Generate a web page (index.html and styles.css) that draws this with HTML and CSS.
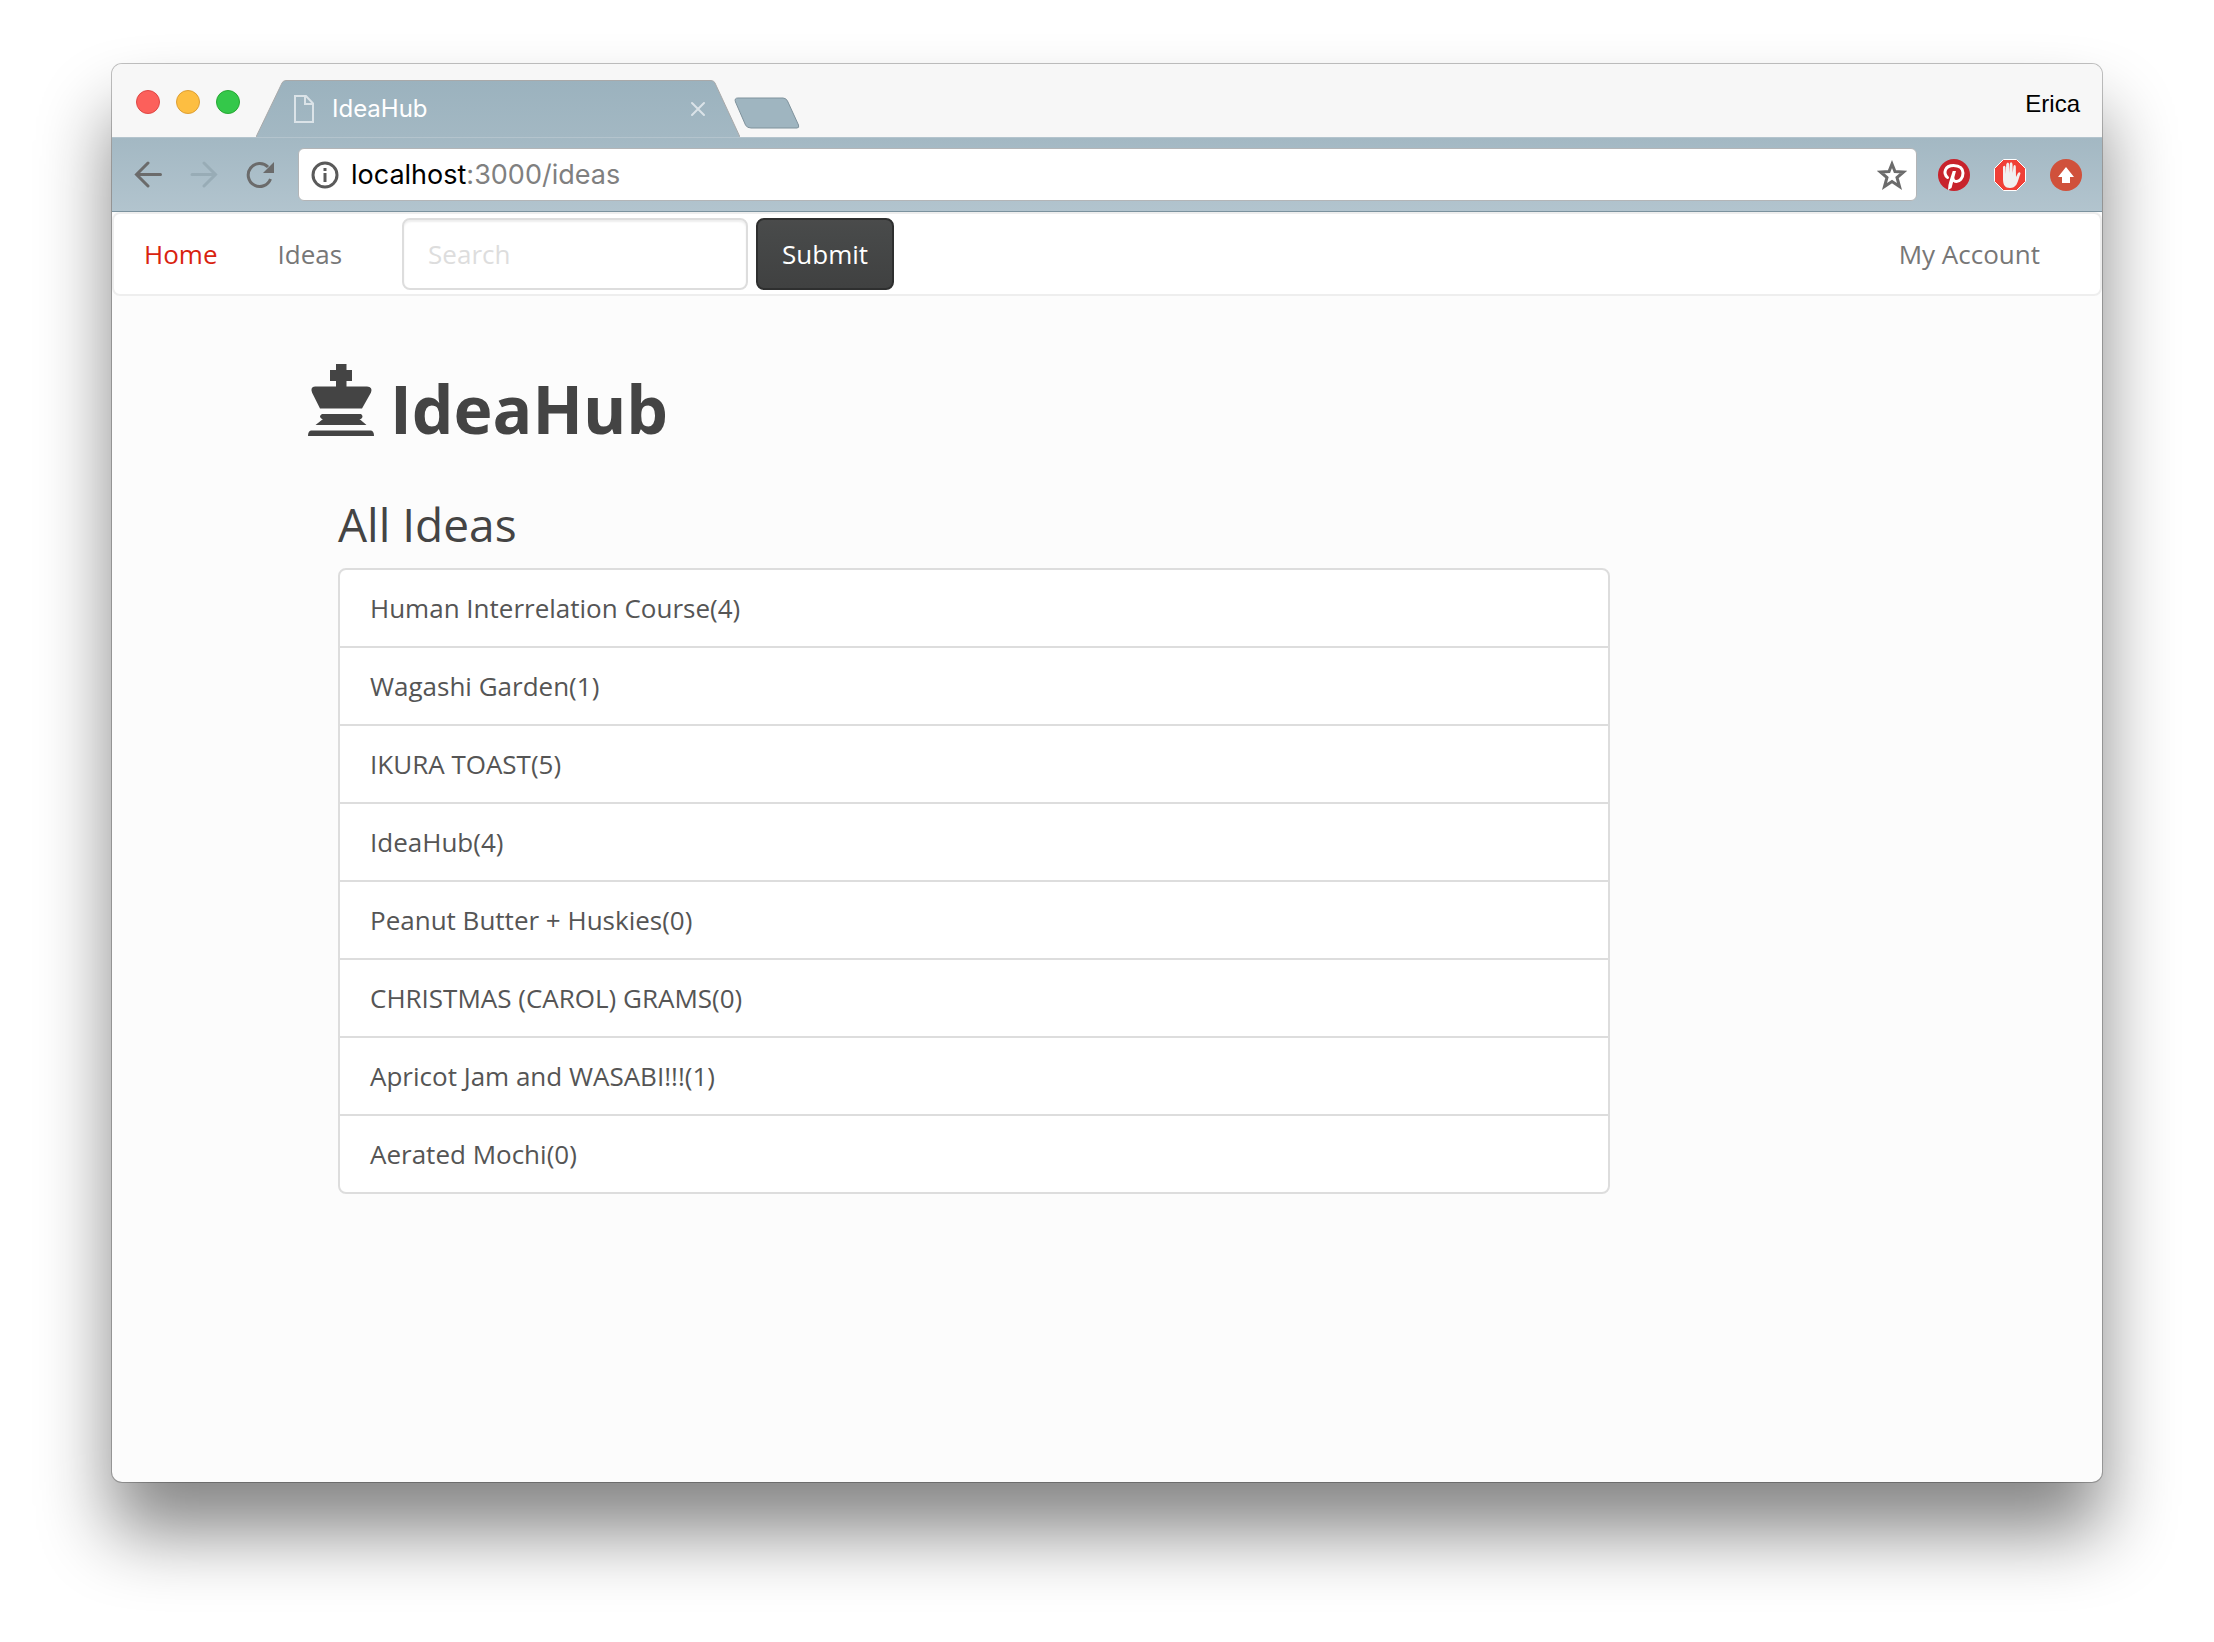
FILE: index.html
```html
<!DOCTYPE html>
<html lang="en">
<head>
<meta charset="utf-8">
<meta name="viewport" content="width=device-width, initial-scale=1">
<title>IdeaHub</title>
<link rel="stylesheet" href="styles.css">
</head>
<body>
<div class="window">
  <header class="titlebar">
    <div class="lights">
      <button class="light light-close" type="button" aria-label="Close window"></button>
      <button class="light light-min" type="button" aria-label="Minimize window"></button>
      <button class="light light-max" type="button" aria-label="Zoom window"></button>
    </div>
    <div class="tab">
      <svg class="tab-shape" viewBox="0 0 484 57" aria-hidden="true">
        <defs>
          <linearGradient id="tabFill" x1="0" y1="0" x2="0" y2="1">
            <stop offset="0" stop-color="#9bb2be"/><stop offset="1" stop-color="#a3b8c3"/>
          </linearGradient>
        </defs>
        <path d="M0 57 L26 3 Q27 .5 30 .5 H455 Q458 .5 459 3 L484 57 Z" fill="url(#tabFill)"/>
        <path d="M0 57 L26 3 Q27 .5 30 .5 H455 Q458 .5 459 3 L484 57" fill="none" stroke="#a9a9a9"/>
      </svg>
      <svg class="tab-file" viewBox="0 0 20 28" aria-hidden="true">
        <path d="M1 1 H12 L19 8.500 V27 H1 Z M11 1 V9 H19" fill="none" stroke="#dbe3e8" stroke-width="2"/>
      </svg>
      <span class="tab-title">IdeaHub</span>
      <button class="tab-close" type="button" aria-label="Close tab">
        <svg viewBox="0 0 16 16"><path d="M2 2 L14 14 M14 2 L2 14" stroke="#dbe3e8" stroke-width="2" stroke-linecap="round"/></svg>
      </button>
    </div>
    <button class="new-tab" type="button" aria-label="New tab">
      <svg viewBox="0 0 66 32"><path d="M4 1 H49 Q52 1 53.500 4 L64.500 28 Q65.500 31 63 31 H17 Q13 31 11.500 28 L1.500 5 Q0 1 4 1 Z" fill="#9fb5c0" stroke="#7f929c"/></svg>
    </button>
    <button class="profile" type="button">Erica</button>
  </header>

  <div class="toolbar">
    <div class="tools">
      <button class="tool" type="button" aria-label="Back">
        <svg viewBox="0 0 28 28"><path d="M26.500 13.500 H3 M14 2 L2.500 13.500 L14 25" fill="none" stroke="#6b6b6b" stroke-width="3" stroke-linecap="round"/></svg>
      </button>
      <button class="tool" type="button" aria-label="Forward">
        <svg viewBox="0 0 28 28"><path d="M2 13.500 H25 M14 2 L25.500 13.500 L14 25" fill="none" stroke="#98acb6" stroke-width="3" stroke-linecap="round"/></svg>
      </button>
      <button class="tool" type="button" aria-label="Reload">
        <svg viewBox="0 0 28 28"><path d="M24.500 18 A11.500 11.500 0 1 1 22 6" fill="none" stroke="#6b6b6b" stroke-width="3"/><path d="M28 1 V12 H17 Z" fill="#6b6b6b"/></svg>
      </button>
    </div>
    <div class="address">
      <svg class="info" viewBox="0 0 28 28" aria-hidden="true"><circle cx="14" cy="14" r="12" fill="none" stroke="#5a5a5a" stroke-width="3"/><path d="M14 7 V10 M14 12 V21" stroke="#5a5a5a" stroke-width="3"/></svg>
      <span class="url">localhost<span class="url-path">:3000/ideas</span></span>
      <svg class="star" viewBox="0 0 30 30" aria-hidden="true"><path d="M15 4 L18 11.500 L26.500 12 L20 17.500 L22.500 26.500 L15 21.500 L7.500 26.500 L10 17.500 L3.500 12 L12 11.500 Z" fill="none" stroke="#6b6b6b" stroke-width="3"/></svg>
    </div>
    <button class="ext" type="button" aria-label="Pinterest">
      <svg viewBox="0 0 32 32"><circle cx="16" cy="16" r="16" fill="#c8232c"/><path d="M9.500 18.500 C5 14.500 6.500 6.500 15.500 6.500 C22 6.500 25 10 25 14 C25 19.500 21.500 22.500 18.500 22.500 C16.500 22.500 15 21 15 19.500" fill="none" stroke="#fff" stroke-width="3" stroke-linecap="round"/><path d="M14.700 12 H18 L13.500 29 L10 31 Q10 26 11.500 22 Z" fill="#fff"/></svg>
    </button>
    <button class="ext" type="button" aria-label="Ad blocker">
      <svg viewBox="0 0 32 32"><path d="M9.500 .5 H22.500 L31.500 9.500 V22.500 L22.500 31.500 H9.500 L.5 22.500 V9.500 Z" fill="#f04037" stroke="#fff"/><path d="M9 20 V8 Q10.200 5.500 11.500 8 V15 L12.300 5 Q14 2 15.200 5 V14 L16 4 Q17.700 2 18.500 5 L18.700 14 L19.500 7 Q21 5 21.800 7.500 L22 18 L24 14 Q26 12.500 26.500 14.500 C25 18 24.500 22 22.500 25.500 Q20 29 16 29 C11 29 9 26 9 20 Z" fill="#f1f1f1"/></svg>
    </button>
    <button class="ext" type="button" aria-label="Upload">
      <svg viewBox="0 0 32 32"><circle cx="16" cy="16" r="16" fill="#d0513b"/><path d="M16 8 L24 18 H20 V24 H12 V18 H8 Z" fill="#fff"/></svg>
    </button>
  </div>

  <div class="page">
    <nav class="navbar">
      <a class="nav-link nav-home" href="#">Home</a>
      <a class="nav-link" href="#">Ideas</a>
      <form class="search" role="search">
        <input class="search-input" type="text" placeholder="Search" aria-label="Search">
        <button class="submit" type="button">Submit</button>
      </form>
      <a class="nav-link nav-account" href="#">My Account</a>
    </nav>
    <main class="content">
      <h1 class="brand">
        <svg class="king" viewBox="0 0 66 72" aria-hidden="true"><path d="M28 0 H38.500 V6 H44 V17 H38.500 V22.500 H59 Q65 23 63 28.500 L54 44.500 H12 L4 28.500 Q2 23 7 22.500 H28 V17 H22 V6 H28 Z M14 50 H53 Q56 52.500 53 55 H51.500 L58.500 61 H7.500 L15 55 H14 Q10 52.500 14 50 Z M3 66.500 H63 Q66 67 66 72 H0 Q0 67 3 66.500 Z" fill="#444"/></svg>
        <span>IdeaHub</span>
      </h1>
      <section class="ideas">
        <h2 class="heading">All Ideas</h2>
        <ul class="list">
          <li><a class="item" href="#">Human Interrelation Course(4)</a></li>
          <li><a class="item" href="#">Wagashi Garden(1)</a></li>
          <li><a class="item" href="#">IKURA TOAST(5)</a></li>
          <li><a class="item" href="#">IdeaHub(4)</a></li>
          <li><a class="item" href="#">Peanut Butter + Huskies(0)</a></li>
          <li><a class="item" href="#">CHRISTMAS (CAROL) GRAMS(0)</a></li>
          <li><a class="item" href="#">Apricot Jam and WASABI!!!(1)</a></li>
          <li><a class="item" href="#">Aerated Mochi(0)</a></li>
        </ul>
      </section>
    </main>
  </div>
</div>
</body>
</html>
```
FILE: styles.css
```css
* { box-sizing: border-box; }

body {
  margin: 0;
  min-height: 100vh;
  padding: 64px 112px 160px;
  display: flex;
  background: #fff;
  font-family: "Open Sans", sans-serif;
  font-size: 26px;
  line-height: 36px;
  color: #444;
}

button { padding: 0; border: 0; background: none; font: inherit; color: inherit; }
svg { display: block; }
a { text-decoration: none; }

.window {
  flex: 1;
  min-width: 0;
  display: flex;
  flex-direction: column;
  border-radius: 10px;
  background: #fcfcfc;
  overflow: hidden;
  box-shadow: 0 0 0 1px rgba(0, 0, 0, .24), 0 50px 72px rgba(0, 0, 0, .48);
}

/* Title bar */
.titlebar {
  height: 73px;
  display: flex;
  align-items: flex-end;
  padding: 0 22px 0 24px;
  background: #f7f7f7;
}
.lights { display: flex; gap: 16px; margin-bottom: 23px; }
.light { width: 24px; height: 24px; border-radius: 50%; border: 1px solid; }
.light-close { background: #fc605b; border-color: #df4744; }
.light-min { background: #fdbe41; border-color: #de9f34; }
.light-max { background: #34c84a; border-color: #27a833; }

.tab {
  position: relative;
  width: 484px;
  height: 57px;
  margin-left: 16px;
  padding: 0 32px 0 38px;
  display: flex;
  align-items: center;
}
.tab-shape { position: absolute; left: 0; top: 0; width: 484px; height: 57px; }
.tab-file { position: relative; width: 20px; height: 28px; }
.tab-title {
  position: relative;
  flex: 1;
  margin-left: 18px;
  font-family: Inter, sans-serif;
  font-size: 24px;
  color: #fff;
}
.tab-close { position: relative; width: 16px; height: 16px; margin-right: 2px; }
.new-tab { width: 66px; height: 32px; margin: 0 0 8px -6px; }
.profile {
  margin: 0 0 15px auto;
  font-family: "Liberation Sans", sans-serif;
  font-size: 24px;
  color: #000;
}

/* Toolbar */
.toolbar {
  height: 75px;
  display: flex;
  align-items: center;
  padding: 0 20px 0 22px;
  border-top: 1px solid #b4c4cd;
  border-bottom: 1px solid #7b929e;
  background: linear-gradient(#a3b8c3, #b2c4ce);
}
.tools { display: flex; gap: 28px; margin-right: 24px; }
.tool { width: 28px; height: 28px; }
.address {
  flex: 1;
  height: 53px;
  margin-right: 21px;
  padding: 0 9px 0 12px;
  display: flex;
  align-items: center;
  gap: 12px;
  border: 1px solid #b3b5b7;
  border-radius: 6px;
  background: #fff;
}
.info { width: 28px; height: 28px; }
.url { flex: 1; font-family: Inter, sans-serif; font-size: 27px; color: #000; }
.url-path { color: #808080; }
.star { width: 30px; height: 30px; }
.ext { width: 32px; height: 32px; margin-left: 24px; }
.address + .ext { margin-left: 0; }

/* Page */
.page { flex: 1; padding-bottom: 40px; }
.navbar {
  display: flex;
  align-items: center;
  height: 84px;
  padding: 0 60px 0 30px;
  border: 2px solid #eee;
  border-radius: 8px;
  background: #fff;
}
.nav-link { color: #777; margin-right: 60px; }
.nav-home { color: #d9230f; }
.nav-account { margin: 0 0 0 auto; }
.search { display: flex; gap: 8px; }
.search-input {
  width: 346px;
  height: 72px;
  padding: 0 24px;
  border: 2px solid #ddd;
  border-radius: 8px;
  background: #fff;
  box-shadow: inset 0 2px 2px rgba(0, 0, 0, .07);
  font: inherit;
  color: #777;
}
.search-input::placeholder { color: #ddd; opacity: 1; }
.submit {
  width: 138px;
  height: 72px;
  border: 2px solid #2e2f2f;
  border-radius: 8px;
  background: linear-gradient(#4a4b4b, #474949 20%, #404141);
  color: #fff;
}

.content { padding: 66px 20px 0 196px; }
.brand {
  display: flex;
  align-items: flex-start;
  gap: 16px;
  margin: 0;
  font-size: 66px;
  line-height: 76px;
}
.king { width: 66px; height: 72px; margin-top: 2px; }
.brand span { margin-top: 8px; }
.ideas { max-width: 1302px; padding-left: 30px; }
.heading { margin: 52px 0 18px; font-size: 46px; line-height: 52px; font-weight: 400; }
.list {
  margin: 0;
  padding: 0;
  list-style: none;
  border: 2px solid #ddd;
  border-radius: 8px;
  background: #fff;
}
.list li + li { border-top: 2px solid #ddd; }
.item { display: block; padding: 20px 30px; color: #555; }
```
